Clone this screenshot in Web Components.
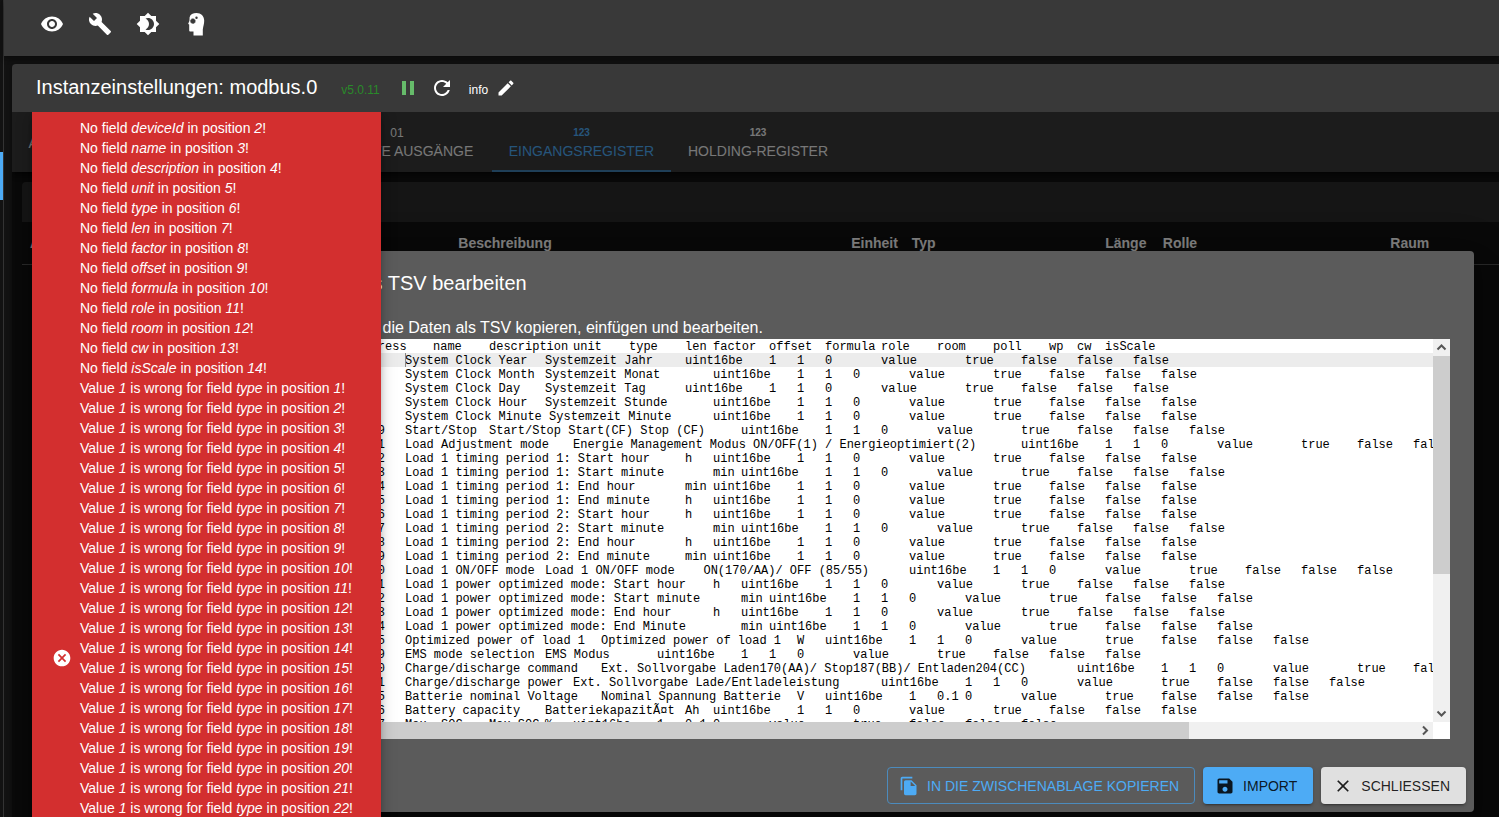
<!DOCTYPE html>
<html lang="de">
<head>
<meta charset="utf-8">
<title>Instanzeinstellungen: modbus.0</title>
<style>
  html, body { margin: 0; height: 100%; background: #121212; }
  body { font-family: "Liberation Sans", Arial, sans-serif; color: #fff; overflow: hidden; }
</style>
</head>
<body>
<admin-app></admin-app>

<script>
const ICONS = {
  eye: 'M12 4.5C7 4.5 2.73 7.61 1 12c1.73 4.39 6 7.5 11 7.5s9.27-3.11 11-7.5c-1.73-4.39-6-7.5-11-7.5zM12 17c-2.76 0-5-2.24-5-5s2.24-5 5-5 5 2.24 5 5-2.24 5-5 5zm0-8c-1.66 0-3 1.34-3 3s1.34 3 3 3 3-1.34 3-3-1.34-3-3-3z',
  wrench: 'M22.7 19l-9.1-9.1c.9-2.3.4-5-1.5-6.9-2-2-5-2.4-7.4-1.3L9 6 6 9 1.6 4.7C.4 7.1.9 10.1 2.9 12.1c1.9 1.9 4.6 2.4 6.9 1.5l9.1 9.1c.4.4 1 .4 1.4 0l2.3-2.3c.5-.4.5-1.1.1-1.4z',
  brightness: 'M20 8.69V4h-4.69L12 .69 8.69 4H4v4.69L.69 12 4 15.31V20h4.69L12 23.31 15.31 20H20v-4.69L23.31 12 20 8.69zM12 18c-.89 0-1.74-.2-2.5-.55C11.56 16.5 13 14.42 13 12s-1.44-4.5-3.5-5.45C10.26 6.2 11.11 6 12 6c3.31 0 6 2.69 6 6s-2.69 6-6 6z',
  head: 'M12.500 1C9 1 6.300 2.300 5.600 5.200L5.400 9 4.300 11.600C4.100 12.100 4.400 12.500 5.200 12.600V18.300C5.200 19.200 5.600 19.600 6.500 19.600H9.500V23.500H18.800V17.500C19.300 14 20.200 12 20.200 8.500 20.200 4 17 1 12.500 1zM7.900 6.200l1 .6 1.100-.3.6 1 1 .5-.3 1.100.3 1.100-1 .5-.6 1-1.100-.3-1 .3-.6-1-1.100-.5.3-1.100-.3-1.100 1.100-.5zM12.500 4.600a1.200 1.200 0 1 1 0 2.400 1.200 1.200 0 0 1 0-2.400z',
  pause: 'M6 19h4V5H6v14zm8-14v14h4V5h-4z',
  refresh: 'M17.65 6.35C16.2 4.9 14.21 4 12 4c-4.42 0-7.99 3.58-7.99 8s3.57 8 7.99 8c3.73 0 6.84-2.55 7.73-6h-2.08c-.82 2.33-3.04 4-5.65 4-3.31 0-6-2.69-6-6s2.69-6 6-6c1.66 0 3.14.69 4.22 1.78L13 11h7V4l-2.35 2.35z',
  edit: 'M3 17.25V21h3.75L17.81 9.94l-3.75-3.75L3 17.25zM20.71 7.04c.39-.39.39-1.02 0-1.41l-2.34-2.34c-.39-.39-1.02-.39-1.41 0l-1.83 1.83 3.75 3.75 1.83-1.83z',
  cancel: 'M12 2C6.47 2 2 6.47 2 12s4.47 10 10 10 10-4.47 10-10S17.53 2 12 2zm5 13.59L15.59 17 12 13.41 8.41 17 7 15.59 10.59 12 7 8.41 8.41 7 12 10.59 15.59 7 17 8.41 13.41 12 17 15.59z',
  copy: 'M16 1H4c-1.100 0-2 .9-2 2v14h2V3h12V1zm-1 4l6 6v10c0 1.100-.9 2-2 2H7.990C6.890 23 6 22.100 6 21V7c0-1.100.890-2 1.990-2h7zm-1 7h5.500L14 6.500V12z',
  save: 'M17 3H5c-1.110 0-2 .9-2 2v14c0 1.100.890 2 2 2h14c1.100 0 2-.9 2-2V7l-4-4zm-5 16c-1.660 0-3-1.340-3-3s1.340-3 3-3 3 1.340 3 3-1.340 3-3 3zm3-10H5V5h10v4z',
  close: 'M19 6.410L17.590 5 12 10.590 6.410 5 5 6.410 10.590 12 5 17.590 6.410 19 12 13.410 17.590 19 19 17.590 13.410 12z'
};

class BaseElement extends HTMLElement {
  connectedCallback() {
    if (this.shadowRoot) return;
    this.attachShadow({ mode: 'open' }).innerHTML = this.render();
  }
}

class AppIcon extends BaseElement {
  render() {
    const size = this.getAttribute('size') || 24;
    return `<style>
      :host { display: inline-flex; flex: none; }
      svg { display: block; fill: currentColor; }
    </style>
    <svg width="${size}" height="${size}" viewBox="0 0 24 24" aria-hidden="true"><path fill-rule="evenodd" d="${ICONS[this.getAttribute('name')]}"/></svg>`;
  }
}

class IconButton extends BaseElement {
  render() {
    return `<style>
      :host { display: inline-flex; flex: none; }
      button { display: flex; align-items: center; justify-content: center; padding: var(--pad, 12px); border: 0; background: none; color: inherit; border-radius: 50%; }
    </style>
    <button type="button" aria-label="${this.getAttribute('label')}"><app-icon name="${this.getAttribute('icon')}" size="${this.getAttribute('size') || 24}"></app-icon></button>`;
  }
}

class AppBar extends BaseElement {
  render() {
    return `<style>
      :host { display: flex; flex: none; align-items: center; height: 56px; padding: 0 24px; background: #393939; box-shadow: 0 2px 4px -1px rgba(0,0,0,.3), 0 4px 5px rgba(0,0,0,.2); box-sizing: border-box; padding-bottom: 8px; }
    </style>
    <icon-button icon="eye" label="Ansicht"></icon-button>
    <icon-button icon="wrench" label="Systemeinstellungen"></icon-button>
    <icon-button icon="brightness" label="Farbschema"></icon-button>
    <icon-button icon="head" label="Expertenmodus"></icon-button>`;
  }
}

class InstanceHeader extends BaseElement {
  render() {
    return `<style>
      :host { display: flex; flex: none; align-items: center; height: 48px; padding-left: 24px; background: #393939; border-radius: 4px 0 0 0; box-sizing: border-box; font-size: 12px; --pad: 0; }
      h1 { margin: 0 24px 2px 0; font-size: 20px; font-weight: 400; line-height: 24px; }
      .version { color: #2a8a2a; margin-right: 16px; padding-top: 4px; }
      .run { color: #66bb6a; margin-right: 10px; }
      .reload { margin-right: 15px; }
      label { display: flex; align-items: center; gap: 8px; }
      label span { padding-top: 4px; }
    </style>
    <h1>Instanzeinstellungen: modbus.0</h1>
    <span class="version">v5.0.11</span>
    <icon-button class="run" icon="pause" label="Anhalten"></icon-button>
    <icon-button class="reload" icon="refresh" label="Neu starten"></icon-button>
    <label><span>info</span><icon-button icon="edit" size="20" label="Log-Level bearbeiten"></icon-button></label>`;
  }
}

class TabItem extends BaseElement {
  render() {
    return `<style>
      :host { display: flex; flex: none; }
      button { flex: 1; display: flex; flex-direction: column; align-items: center; justify-content: center; gap: 1px; padding: 4px 16px 0; border: 0; border-bottom: 2px solid transparent; background: none; color: #eee; font: 14px/20px "Liberation Sans", Arial, sans-serif; text-transform: uppercase; white-space: nowrap; }
      :host([selected]) button { color: #4dabf5; border-bottom-color: #3f7fb0; }
      .glyph { line-height: 14px; font-size: 12px; }
      .glyph.bold { line-height: 14px; font-size: 10px; font-weight: 700; }
    </style>
    <button type="button" role="tab" aria-selected="${this.hasAttribute('selected')}">
      ${this.hasAttribute('glyph') ? `<span class="glyph ${this.getAttribute('glyph') === '123' ? 'bold' : ''}">${this.getAttribute('glyph')}</span>` : ''}
      <span><slot></slot></span>
    </button>`;
  }
}

class TabStrip extends BaseElement {
  render() {
    return `<style>
      :host { display: flex; flex: none; height: 60px; background: #383838; box-shadow: 0 2px 4px -1px rgba(0,0,0,.4), 0 4px 5px rgba(0,0,0,.3); }
      .general { width: 113px; margin-right: 177px; }
      .outputs { width: 190px; }
      .input { width: 179px; }
      .holding { width: 174px; }
    </style>
    <tab-item class="general">Allgemein</tab-item>
    <tab-item class="outputs" glyph="01">Diskrete Ausgänge</tab-item>
    <tab-item class="input" glyph="123" selected>Eingangsregister</tab-item>
    <tab-item class="holding" glyph="123">Holding-Register</tab-item>`;
  }
}

class RegisterTable extends BaseElement {
  render() {
    return `<style>
      :host { display: block; padding: 10px 0 0 10px; }
      .toolbar { height: 40px; background: #2a2a2a; border-radius: 4px 0 0 0; }
      table { width: 100%; table-layout: fixed; border-collapse: collapse; }
      th { height: 42px; padding: 0 8px; text-align: left; font-size: 14px; line-height: 20px; white-space: nowrap; border-bottom: 1px solid #515151; }
      .address { width: 29%; } .text { width: 26.6%; } .unit { width: 4.1%; }
      .type { width: 13.1%; } .len { width: 3.9%; } .role { width: 15.4%; }
    </style>
    <div class="toolbar"></div>
    <table>
      <colgroup><col class="address"><col class="text"><col class="unit"><col class="type"><col class="len"><col class="role"><col></colgroup>
      <thead><tr><th>Adresse</th><th>Beschreibung</th><th>Einheit</th><th>Typ</th><th>Länge</th><th>Rolle</th><th>Raum</th></tr></thead>
    </table>`;
  }
}

class ActionButton extends BaseElement {
  render() {
    return `<style>
      :host { display: inline-flex; }
      button { display: flex; align-items: center; gap: 8px; height: 37px; padding: 0 16px 0 12px; border: 0; border-radius: 4px; font: 14px/24px "Liberation Sans", Arial, sans-serif; text-transform: uppercase; white-space: nowrap; box-shadow: 0 3px 1px -2px rgba(0,0,0,.2), 0 2px 2px rgba(0,0,0,.14), 0 1px 5px rgba(0,0,0,.12); }
      :host([kind=outlined]) button { background: none; color: #4dabf5; border: 1px solid #4c8bbd; padding: 0 15px 0 11px; box-shadow: none; }
      :host([kind=primary]) button { background: #4dabf5; color: rgba(0,0,0,.87); }
      :host([kind=grey]) button { background: #e0e0e0; color: rgba(0,0,0,.87); }
    </style>
    <button type="button"><app-icon name="${this.getAttribute('icon')}" size="20"></app-icon><slot></slot></button>`;
  }
}

const TAIL = 'value\t\ttrue\tfalse\tfalse\tfalse';
const LINES = [
  '_address\tname\tdescription\tunit\ttype\tlen\tfactor\toffset\tformula\trole\troom\tpoll\twp\tcw\tisScale',
  '3000\tSystem Clock Year\tSystemzeit Jahr\t\tuint16be\t1\t1\t0\t\t' + TAIL,
  '3001\tSystem Clock Month\tSystemzeit Monat\t\tuint16be\t1\t1\t0\t\t' + TAIL,
  '3002\tSystem Clock Day\tSystemzeit Tag\t\tuint16be\t1\t1\t0\t\t' + TAIL,
  '3003\tSystem Clock Hour\tSystemzeit Stunde\t\tuint16be\t1\t1\t0\t\t' + TAIL,
  '3004\tSystem Clock Minute Systemzeit Minute\t\tuint16be\t1\t1\t0\t\t' + TAIL,
  '43009\tStart/Stop\tStart/Stop Start(CF) Stop (CF)\t\tuint16be\t1\t1\t0\t\t' + TAIL,
  '43011\tLoad Adjustment mode\tEnergie Management Modus ON/OFF(1) / Energieoptimiert(2)\t\tuint16be\t1\t1\t0\t\t' + TAIL,
  '43012\tLoad 1 timing period 1: Start hour\t\th\tuint16be\t1\t1\t0\t\t' + TAIL,
  '43013\tLoad 1 timing period 1: Start minute\t\tmin\tuint16be\t1\t1\t0\t\t' + TAIL,
  '43014\tLoad 1 timing period 1: End hour\t\tmin\tuint16be\t1\t1\t0\t\t' + TAIL,
  '43015\tLoad 1 timing period 1: End minute\t\th\tuint16be\t1\t1\t0\t\t' + TAIL,
  '43016\tLoad 1 timing period 2: Start hour\t\th\tuint16be\t1\t1\t0\t\t' + TAIL,
  '43017\tLoad 1 timing period 2: Start minute\t\tmin\tuint16be\t1\t1\t0\t\t' + TAIL,
  '43018\tLoad 1 timing period 2: End hour\t\th\tuint16be\t1\t1\t0\t\t' + TAIL,
  '43019\tLoad 1 timing period 2: End minute\t\tmin\tuint16be\t1\t1\t0\t\t' + TAIL,
  '43020\tLoad 1 ON/OFF mode\tLoad 1 ON/OFF mode    ON(170/AA)/ OFF (85/55)\t\tuint16be\t1\t1\t0\t\t' + TAIL,
  '43021\tLoad 1 power optimized mode: Start hour\th\tuint16be\t1\t1\t0\t\t' + TAIL,
  '43022\tLoad 1 power optimized mode: Start minute\t\tmin\tuint16be\t1\t1\t0\t\t' + TAIL,
  '43023\tLoad 1 power optimized mode: End hour\t\th\tuint16be\t1\t1\t0\t\t' + TAIL,
  '43024\tLoad 1 power optimized mode: End Minute \t\tmin\tuint16be\t1\t1\t0\t\t' + TAIL,
  '43025\tOptimized power of load 1\tOptimized power of load 1\tW\tuint16be\t1\t1\t0\t\t' + TAIL,
  '43029\tEMS mode selection\tEMS Modus\t\tuint16be\t1\t1\t0\t\t' + TAIL,
  '43030\tCharge/discharge command\tExt. Sollvorgabe Laden170(AA)/ Stop187(BB)/ Entladen204(CC)\t\tuint16be\t1\t1\t0\t\t' + TAIL,
  '43031\tCharge/discharge power\tExt. Sollvorgabe Lade/Entladeleistung\t\tuint16be\t1\t1\t0\t\t' + TAIL,
  '43035\tBatterie nominal Voltage\tNominal Spannung Batterie\tV\tuint16be\t1\t0.1\t0\t\t' + TAIL,
  '43036\tBattery capacity\tBatteriekapazitÃ¤t\tAh\tuint16be\t1\t1\t0\t\t' + TAIL,
  '43037\tMax. SOC\tMax SOC\t%\tuint16be\t1\t0.1\t0\t\t' + TAIL
];

class TsvEditor extends BaseElement {
  render() {
    return `<style>
      :host { display: grid; grid-template: minmax(0, 1fr) 17px / minmax(0, 1fr) 17px; height: 400px; background: #fff; position: relative; }
      textarea { display: block; box-sizing: border-box; width: 100%; height: 100%; margin: 0; padding: 1px 0 0 51px; border: 0; outline: 0; resize: none; overflow: hidden; white-space: pre; tab-size: 28px; color: #000; font: 12px/14px "Liberation Mono", "DejaVu Sans Mono", monospace; background: linear-gradient(#ececec, #ececec) 0 14px / 100% 14px no-repeat #fff; }
      .caret { position: absolute; left: 107px; top: 14px; width: 1px; height: 14px; background: #888; }
      .bar { display: flex; background: #f0f0f0; color: #555; }
      .bar svg { flex: none; display: block; width: 17px; height: 17px; fill: none; stroke: currentColor; stroke-width: 2; }
      .bar.v { flex-direction: column; }
      .thumb { background: #cdcdcd; }
      .v .thumb { flex: 0 0 57%; } .h .thumb { flex: 0 0 77%; }
      .space { flex: 1; }
    </style>
    <textarea aria-label="TSV-Daten" spellcheck="false" readonly>${LINES.join('\n')}</textarea>
    <div class="bar v"><svg viewBox="0 0 17 17"><path d="M4.500 10.500l4-4 4 4"/></svg><div class="thumb"></div><div class="space"></div><svg viewBox="0 0 17 17"><path d="M4.500 6.500l4 4 4-4"/></svg></div>
    <div class="bar h"><svg viewBox="0 0 17 17"><path d="M10.500 4.500l-4 4 4 4"/></svg><div class="thumb"></div><div class="space"></div><svg viewBox="0 0 17 17"><path d="M7 4.500l4 4-4 4"/></svg></div>
    <div></div>
    <div class="caret"></div>`;
  }
}

class TsvDialog extends BaseElement {
  render() {
    return `<style>
      :host { display: block; width: 1200px; background: #5b5b5b; border-radius: 4px; box-shadow: 0 11px 15px -7px rgba(0,0,0,.2), 0 24px 38px 3px rgba(0,0,0,.14), 0 9px 46px 8px rgba(0,0,0,.12); }
      h2 { margin: 0; padding: 16px 24px; font-size: 20px; line-height: 32px; font-weight: 400; }
      .content { padding: 0 24px 20px; }
      p { margin: 0; padding-top: 2px; font-size: 16px; line-height: 22px; }
      .actions { display: flex; justify-content: flex-end; gap: 8px; padding: 8px; }
    </style>
    <h2>Daten als TSV bearbeiten</h2>
    <div class="content">
      <p>Sie können die Daten als TSV kopieren, einfügen und bearbeiten.</p>
      <tsv-editor></tsv-editor>
    </div>
    <div class="actions">
      <action-button kind="outlined" icon="copy">In die Zwischenablage kopieren</action-button>
      <action-button kind="primary" icon="save">Import</action-button>
      <action-button kind="grey" icon="close">Schliessen</action-button>
    </div>`;
  }
}

const FIELDS = ['deviceId', 'name', 'description', 'unit', 'type', 'len', 'factor', 'offset', 'formula', 'role', 'room', 'cw', 'isScale'];

class ErrorSnackbar extends BaseElement {
  render() {
    const missing = FIELDS.map((f, i) => `<div>No field <i>${f}</i> in position <i>${i + 2}</i>!</div>`).join('');
    const wrong = Array.from({ length: 22 }, (_, i) => `<div>Value <i>1</i> is wrong for field <i>type</i> in position <i>${i + 1}</i>!</div>`).join('');
    return `<style>
      :host { display: flex; align-items: center; gap: 8px; box-sizing: border-box; width: 349px; min-height: 1092px; padding: 6px 16px 6px 20px; background: #d32f2f; font-size: 14px; line-height: 20px; white-space: nowrap; box-shadow: 0 3px 5px -1px rgba(0,0,0,.2), 0 6px 10px rgba(0,0,0,.14), 0 1px 18px rgba(0,0,0,.12); }
      .messages { align-self: flex-start; }
    </style>
    <app-icon name="cancel" size="20"></app-icon>
    <div class="messages" role="alert">${missing}${wrong}</div>`;
  }
}

class AdminApp extends BaseElement {
  render() {
    return `<style>
      :host { display: flex; height: 100vh; overflow: hidden; }
      nav { flex: none; display: flex; flex-direction: column; width: 3px; border-right: 1px solid #333; padding-top: 152px; }
      nav a { display: block; height: 48px; background: #4dabf5; }
      main { flex: 1; min-width: 0; display: flex; flex-direction: column; }
      .panel { flex: 1; min-height: 0; display: flex; flex-direction: column; margin: 8px 0 0 8px; box-shadow: 0 1px 5px rgba(0,0,0,.4); }
      .frame { flex: 1; min-height: 0; position: relative; overflow: hidden; background: #121212; }
      .backdrop { position: absolute; inset: 0; background: rgba(0,0,0,.5); }
      tsv-dialog { position: absolute; top: 139px; right: 25px; }
      error-snackbar { position: absolute; top: 0; left: 20px; }
    </style>
    <nav><a href="#instances" aria-label="Instanzen"></a></nav>
    <main>
      <app-bar></app-bar>
      <section class="panel">
        <instance-header></instance-header>
        <div class="frame">
          <tab-strip role="tablist"></tab-strip>
          <register-table></register-table>
          <div class="backdrop"></div>
          <tsv-dialog role="dialog"></tsv-dialog>
          <error-snackbar></error-snackbar>
        </div>
      </section>
    </main>`;
  }
}

customElements.define('app-icon', AppIcon);
customElements.define('icon-button', IconButton);
customElements.define('app-bar', AppBar);
customElements.define('instance-header', InstanceHeader);
customElements.define('tab-item', TabItem);
customElements.define('tab-strip', TabStrip);
customElements.define('register-table', RegisterTable);
customElements.define('action-button', ActionButton);
customElements.define('tsv-editor', TsvEditor);
customElements.define('tsv-dialog', TsvDialog);
customElements.define('error-snackbar', ErrorSnackbar);
customElements.define('admin-app', AdminApp);
</script>
</body>
</html>
